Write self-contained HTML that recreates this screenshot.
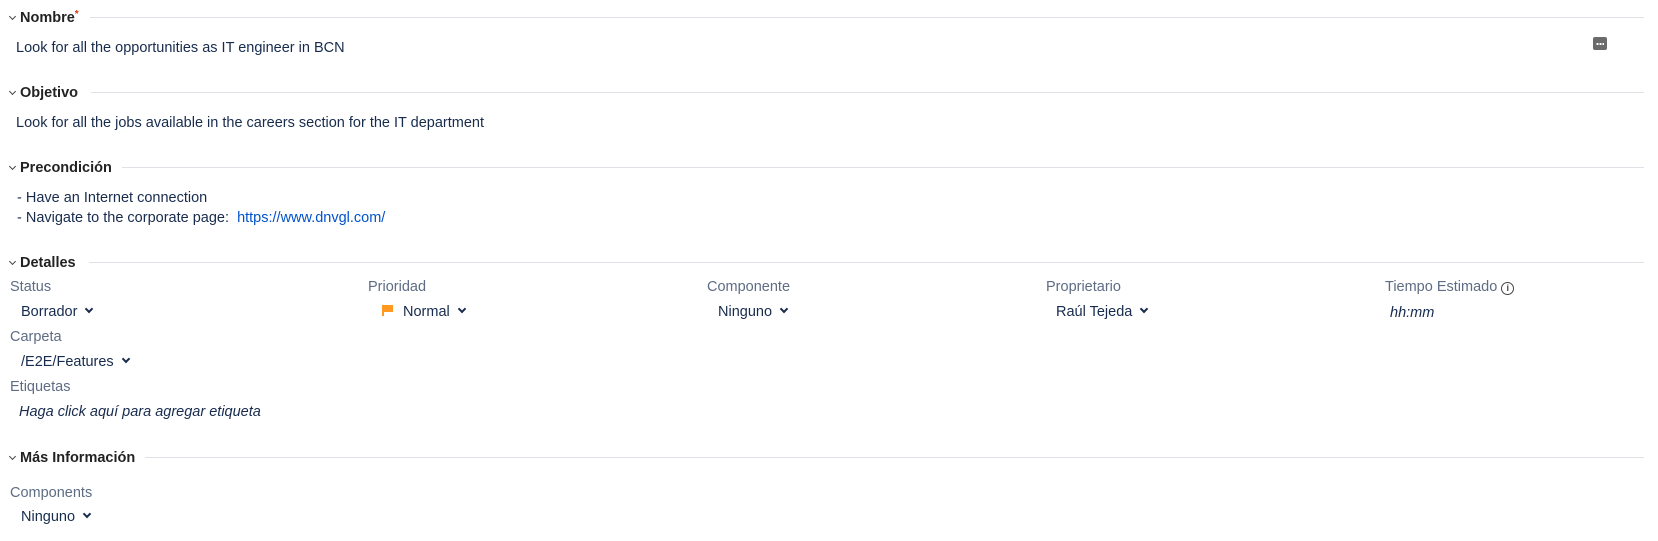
<!DOCTYPE html>
<html><head><meta charset="utf-8"><style>
body{margin:0;width:1658px;height:541px;background:#fff;position:relative;overflow:hidden;font-family:"Liberation Sans",Arial,sans-serif;color:#172b4d;font-size:14.5px}
.a{position:absolute;line-height:18px;white-space:nowrap;margin-top:1px}
.h{font-weight:bold;color:#222;font-size:14.5px}
.ln{position:absolute;height:1px;background:#dfe1e6;right:14px}
.lb{color:#5e6c84}
.chev{position:absolute;width:4px;height:4px;border-right:1px solid #444;border-bottom:1px solid #444;transform:rotate(45deg)}
.dd{display:inline-block;width:4px;height:4px;border-right:2px solid #172b4d;border-bottom:2px solid #172b4d;transform:rotate(45deg);margin-left:9px;position:relative;top:-4px}
i{font-style:italic}
</style></head><body>
<div class="chev" style="left:10px;top:14px"></div>
<div class="a h" style="left:20px;top:8px">Nombre<span style="color:#de350b;font-size:10px;vertical-align:top;position:relative;top:-3px">*</span></div>
<div class="ln" style="left:90px;top:17px"></div>
<div class="a" style="left:16px;top:38px">Look for all the opportunities as IT engineer in BCN</div>
<div style="position:absolute;left:1593px;top:37px;width:14px;height:13px;background:#6b6b6b;border-radius:2px"><div style="position:absolute;left:3px;top:6px;width:8px;height:2px;background-image:radial-gradient(#fff 60%,transparent 65%);background-size:3px 2px"></div></div>

<div class="chev" style="left:10px;top:89px"></div>
<div class="a h" style="left:20px;top:83px">Objetivo</div>
<div class="ln" style="left:91px;top:92px"></div>
<div class="a" style="left:16px;top:113px">Look for all the jobs available in the careers section for the IT department</div>

<div class="chev" style="left:10px;top:164px"></div>
<div class="a h" style="left:20px;top:158px">Precondición</div>
<div class="ln" style="left:122px;top:167px"></div>
<div class="a" style="left:17px;top:188px">- Have an Internet connection</div>
<div class="a" style="left:17px;top:208px">- Navigate to the corporate page:&nbsp; <span style="color:#0052cc">https://www.dnvgl.com/</span></div>

<div class="chev" style="left:10px;top:259px"></div>
<div class="a h" style="left:20px;top:253px">Detalles</div>
<div class="ln" style="left:89px;top:262px"></div>

<div class="a lb" style="left:10px;top:277px">Status</div>
<div class="a" style="left:21px;top:302px">Borrador<span class="dd"></span></div>
<div class="a lb" style="left:368px;top:277px">Prioridad</div>
<div style="position:absolute;left:382px;top:305px;width:2px;height:11px;background:#ff991f"></div>
<div style="position:absolute;left:384px;top:305px;width:9px;height:7px;background:#ff991f"></div>
<div class="a" style="left:403px;top:302px">Normal<span class="dd"></span></div>
<div class="a lb" style="left:707px;top:277px">Componente</div>
<div class="a" style="left:718px;top:302px">Ninguno<span class="dd"></span></div>
<div class="a lb" style="left:1046px;top:277px">Proprietario</div>
<div class="a" style="left:1056px;top:302px">Raúl Tejeda<span class="dd"></span></div>
<div class="a lb" style="left:1385px;top:277px">Tiempo Estimado <span style="display:inline-block;width:11px;height:11px;border:1.5px solid #444;border-radius:50%;font-size:9px;line-height:11px;text-align:center;color:#444;font-weight:bold;vertical-align:0px">i</span></div>
<div class="a" style="left:1390px;top:303px"><i>hh:mm</i></div>

<div class="a lb" style="left:10px;top:327px">Carpeta</div>
<div class="a" style="left:21px;top:352px">/E2E/Features<span class="dd"></span></div>
<div class="a lb" style="left:10px;top:377px">Etiquetas</div>
<div class="a" style="left:19px;top:402px"><i>Haga click aquí para agregar etiqueta</i></div>

<div class="chev" style="left:10px;top:454px"></div>
<div class="a h" style="left:20px;top:448px">Más Información</div>
<div class="ln" style="left:145px;top:457px"></div>
<div class="a lb" style="left:10px;top:483px">Components</div>
<div class="a" style="left:21px;top:507px">Ninguno<span class="dd"></span></div>
</body></html>
